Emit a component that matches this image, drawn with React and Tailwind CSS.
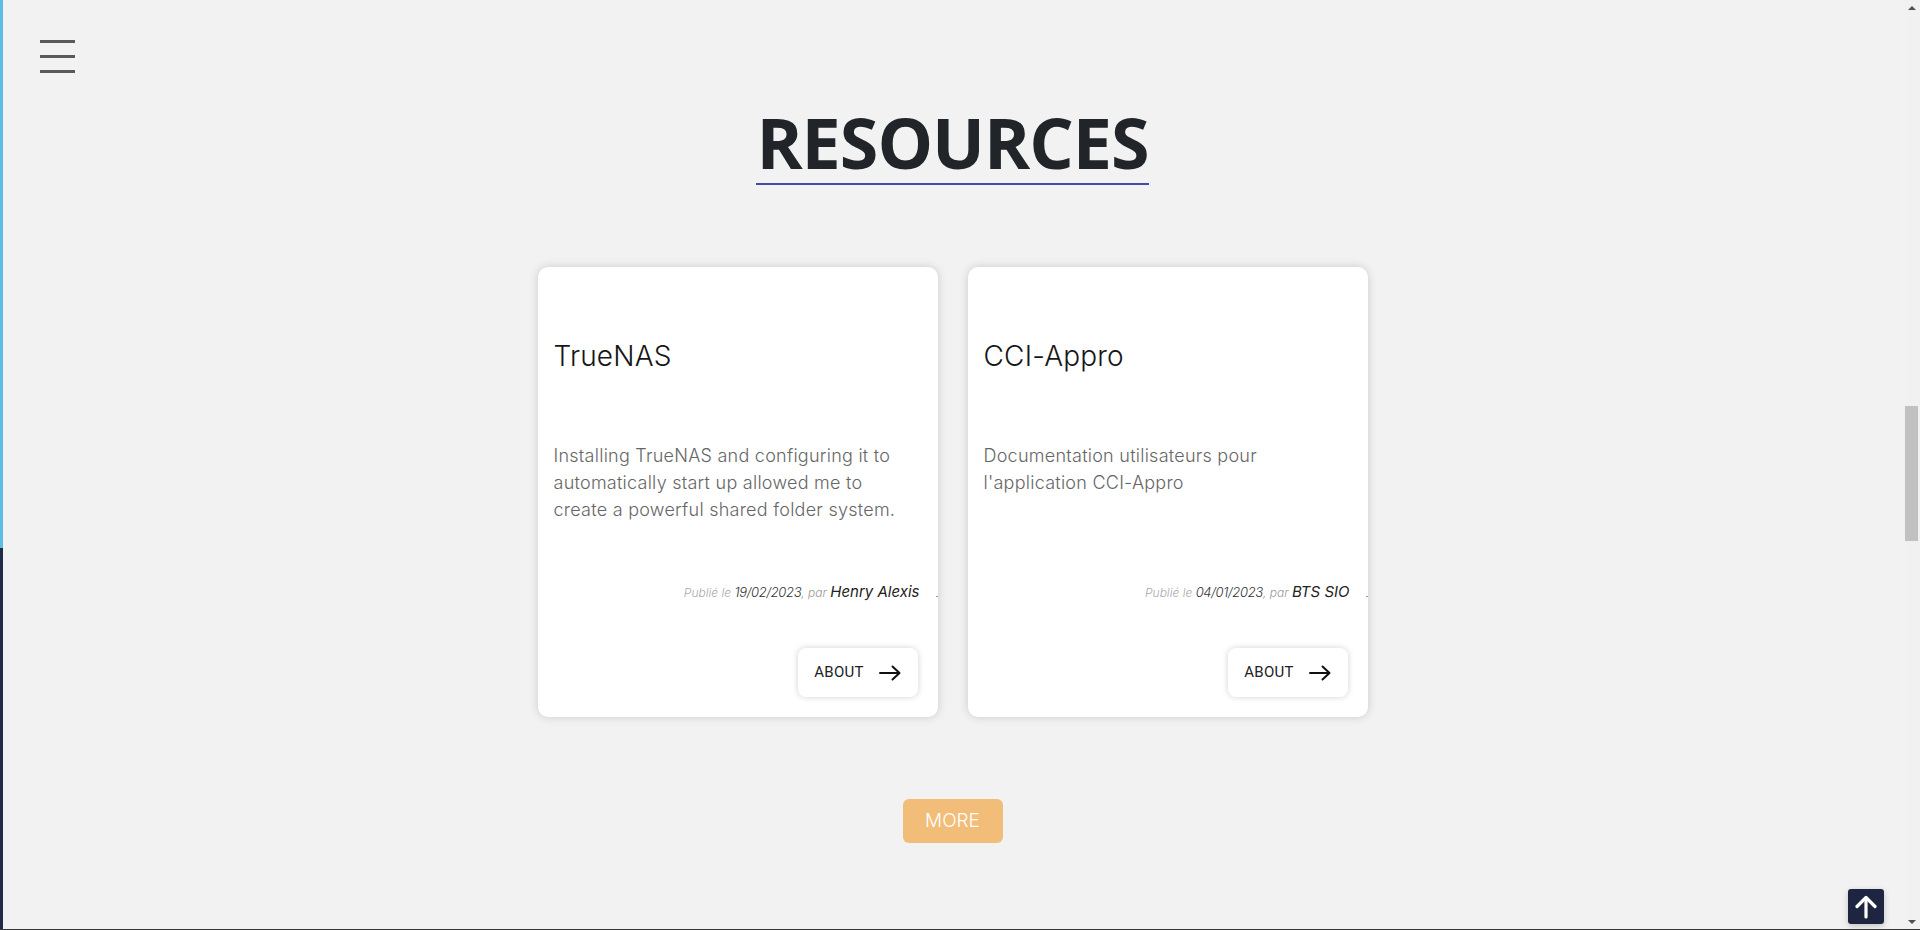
import React from "react";

const resources = [
  {
    title: "TrueNAS",
    description:
      "Installing TrueNAS and configuring it to automatically start up allowed me to create a powerful shared folder system.",
    date: "19/02/2023",
    author: "Henry Alexis",
  },
  {
    title: "CCI-Appro",
    description:
      "Documentation utilisateurs pour l'application CCI-Appro",
    date: "04/01/2023",
    author: "BTS SIO",
  },
];

const ArrowRight = () => (
  <svg width="22" height="16" viewBox="0 0 22 16" fill="none" stroke="#111" strokeWidth="2" strokeLinecap="round" strokeLinejoin="round">
    <path d="M1 8h19" />
    <path d="M13.5 1.5 20.5 8l-7 6.5" />
  </svg>
);

const ResourceCard = ({ item }) => (
  <div className="w-[400px] h-[450px] bg-white rounded-[10px] shadow-[0_0_10px_rgba(0,0,0,0.16)] flex flex-col px-4 pt-[69px] pb-5">
    <h3 className="text-[28px] leading-[40px] font-light text-[#161616] tracking-[0.2px]">
      {item.title}
    </h3>
    <p className="mt-[66px] flex-1 max-w-[358px] text-[18px] leading-[27px] font-light text-[#666] tracking-[0.25px]">
      {item.description}
    </p>
    <div className="flex justify-end items-baseline leading-5 italic font-light -mr-4">
      <span className="text-[12px] text-[#aaa]">Publié le&nbsp;</span>
      <span className="text-[13px] text-[#333] tracking-[-0.3px]">{item.date}</span>
      <span className="text-[12px] text-[#999]">, par&nbsp;</span>
      <span className="text-[15px] text-[#222] font-normal">{item.author}</span>
      <span className="ml-4 w-[2px] h-px bg-[#999]"></span>
    </div>
    <button className="mt-[45px] mr-1 self-end w-[120px] h-[49px] rounded-lg bg-white shadow-[0_0_6px_rgba(0,0,0,0.18)] flex items-center justify-center gap-[15px]">
      <span className="text-[15px] text-[#222] tracking-[0.3px]" style={{ fontFamily: "Roboto, sans-serif" }}>
        ABOUT
      </span>
      <ArrowRight />
    </button>
  </div>
);

const App = () => {
  return (
    <div className="w-full h-[930px] bg-[#f2f2f2] flex flex-col overflow-hidden" style={{ fontFamily: "Inter, 'Noto Sans', sans-serif" }}>
      <div className="flex flex-1">
        {/* sidebar edge */}
        <div className="fixed left-0 top-0 w-[3px] h-[929px] flex flex-col z-10">
          <div className="h-[548px] bg-[#5bbde2]"></div>
          <div className="flex-1 bg-[#232a45]"></div>
        </div>

        {/* menu toggle */}
        <button className="fixed left-10 top-10 w-[35px] flex flex-col gap-3">
          <span className="h-[3px] bg-[#5a5a5a]"></span>
          <span className="h-[3px] bg-[#5a5a5a]"></span>
          <span className="h-[3px] bg-[#5a5a5a]"></span>
        </button>

        <main className="flex-1 flex flex-col items-center pt-[107px]">
          <h2
            className="inline-block text-[70px] leading-[70px] font-bold text-[#212529] tracking-[-1px] pb-[6px] border-b-2 border-[#4848a8]"
            style={{ fontFamily: "'Open Sans', sans-serif" }}
          >
            RESOURCES
          </h2>

          <div className="mt-[82px] flex gap-[30px]">
            {resources.map((item) => (
              <ResourceCard key={item.title} item={item} />
            ))}
          </div>

          <button className="mt-[82px] w-[100px] h-[44px] rounded-md bg-[#f2bd78] text-white text-[19px] font-light">
            MORE
          </button>
        </main>

        {/* scrollbar */}
        <div className="w-[15px] bg-[#f1f1f1] flex flex-col items-start">
          <div className="h-[15px] w-[13px] flex items-center justify-center">
            <div className="w-0 h-0 border-l-[4px] border-r-[4px] border-b-[4px] border-l-transparent border-r-transparent border-b-[#505050]"></div>
          </div>
          <div className="mt-[391px] w-[13px] h-[135px] bg-[#c1c1c1]"></div>
          <div className="flex-1"></div>
          <div className="h-[15px] w-[13px] flex items-center justify-center">
            <div className="w-0 h-0 border-l-[4px] border-r-[4px] border-t-[4px] border-l-transparent border-r-transparent border-t-[#505050]"></div>
          </div>
        </div>

        {/* back to top */}
        <button className="fixed right-[36px] bottom-[6px] w-9 h-[35px] rounded-[3px] bg-[#1e2540] flex items-center justify-center shadow-[0_2px_6px_rgba(0,0,0,0.2)]">
          <svg width="22" height="24" viewBox="0 0 22 24" fill="none" stroke="#fff" strokeWidth="3.2" strokeLinecap="round" strokeLinejoin="round">
            <path d="M11 22V3" />
            <path d="M2 11.5 11 2.5l9 9" />
          </svg>
        </button>
      </div>
      <div className="h-px bg-[#3a3a3a]"></div>
    </div>
  );
};

export default App;
